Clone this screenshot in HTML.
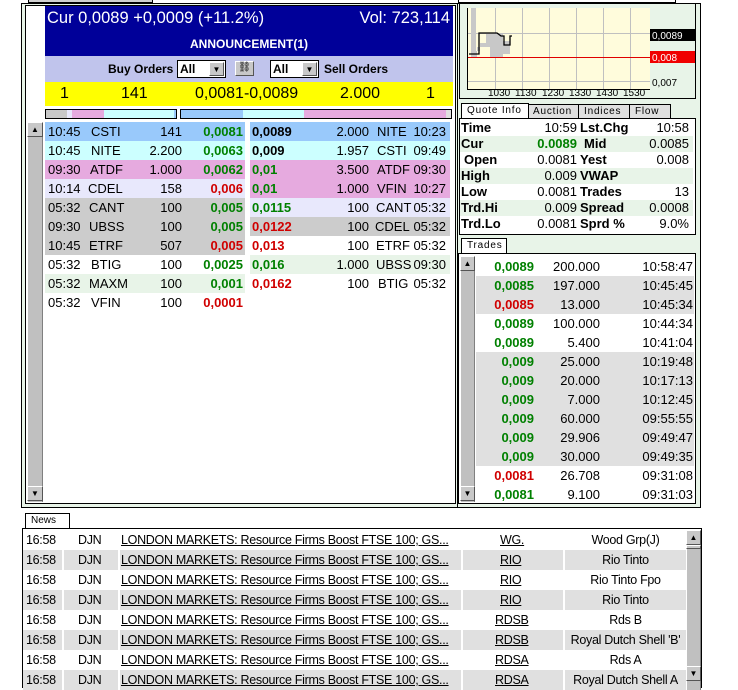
<!DOCTYPE html>
<html><head><meta charset="utf-8"><style>
*{margin:0;padding:0;box-sizing:border-box}
body{width:738px;height:682px;overflow:hidden;background:#fff;font-family:"Liberation Sans",Arial,sans-serif;font-size:13px;color:#000;position:relative}
.a{position:absolute}
.r{position:absolute;height:19px;line-height:19px;white-space:nowrap}
.r span{position:absolute;top:0}
.g{color:#008000;font-weight:bold}
.rd{color:#d00000;font-weight:bold}
.b{font-weight:bold}
.sb{position:absolute;background:#c0c0c0;border-left:1px solid #fff;border-right:1px solid #808080}
.btn{position:absolute;width:15px;height:15px;background:#c8c8c8;border:1px solid;border-color:#fff #555 #555 #fff;font-size:8px;line-height:13px;text-align:center}
.qr{position:absolute;left:460px;width:233px;height:16px;line-height:16px;font-size:13px}
.qr span{position:absolute;top:0}
.tr{position:absolute;left:476px;width:218px;height:19px;line-height:19px}
.tr span{position:absolute;top:0}
.nr{position:absolute;left:23px;width:663px;height:20px;line-height:20px;font-size:12.5px;letter-spacing:-0.3px;white-space:nowrap}
.nr span{position:absolute;top:0;height:20px}
.tab{position:absolute;height:15px;line-height:14px;font-size:10px;letter-spacing:0.8px;border:1px solid #000;border-bottom:none;background:#e0e0e0;padding-left:5px;white-space:nowrap;overflow:hidden}
</style></head><body>
<div class="a" style="left:28px;top:0;width:125px;height:3px;border:1px solid #000;border-top:none;background:#d0d0d0"></div>
<div class="a" style="left:458px;top:0;width:218px;height:3px;border:1px solid #000;border-top:none"></div>
<div class="a" style="left:21px;top:3px;width:437px;height:505px;border:1px solid #000;background:#e8f4e8"></div>
<div class="a" style="left:25px;top:5px;width:431px;height:499px;border:1px solid #000;background:#fff"></div>
<div class="a" style="left:45px;top:6px;width:408px;height:50px;background:#000099;color:#fff">
 <div class="a" style="left:2px;top:3px;font-size:16.5px">Cur 0,0089 +0,0009 (+11.2%)</div>
 <div class="a" style="right:3px;top:3px;font-size:16.5px">Vol: 723,114</div>
 <div class="a" style="left:0;width:408px;top:31px;text-align:center;font-size:12px;font-weight:bold">ANNOUNCEMENT(1)</div>
</div>
<div class="a" style="left:45px;top:56px;width:408px;height:26px;background:#c0c4ec">
 <div class="a" style="left:63px;top:6px;font-weight:bold;font-size:12px">Buy Orders</div>
 <div class="a" style="left:132px;top:4px;width:49px;height:18px;background:#fff;border:1px solid #000;font-weight:bold;font-size:12px;padding-left:2px;line-height:16px">All<div class="btn" style="right:1px;top:1px;width:15px;height:14px">▼</div></div>
 <div class="a" style="left:190px;top:5px;width:19px;height:15px;background:#c8c8c8;border:1px solid;border-color:#fff #555 #555 #fff;font-size:10px;line-height:12px;text-align:center">⛓</div>
 <div class="a" style="left:225px;top:4px;width:49px;height:18px;background:#fff;border:1px solid #000;font-weight:bold;font-size:12px;padding-left:2px;line-height:16px">All<div class="btn" style="right:1px;top:1px;width:15px;height:14px">▼</div></div>
 <div class="a" style="left:279px;top:6px;font-weight:bold;font-size:12px">Sell Orders</div>
</div>
<div class="a" style="left:45px;top:82px;width:408px;height:24px;background:#ffff00;font-size:16px;line-height:24px">
 <span class="a" style="left:15px">1</span><span class="a" style="left:76px">141</span><span class="a" style="left:150px">0,0081-0,0089</span><span class="a" style="left:295px">2.000</span><span class="a" style="left:381px">1</span>
</div>
<div class="a" style="left:45px;top:109px;width:132px;height:10px;border:1px solid #000;background:linear-gradient(90deg,#c8c8c8 0 21px,#e8e8fc 21px 26px,#e6aadf 26px 58px,#ccffff 58px 128px,#99c9fb 128px)"></div>
<div class="a" style="left:180px;top:109px;width:272px;height:10px;border:1px solid #000;background:linear-gradient(90deg,#99c9fb 0 62px,#ccffff 62px 123px,#e6aadf 123px 265px,#e0e0e0 265px)"></div>
<div class="sb" style="left:27px;top:122px;width:16px;height:380px"></div>
<div class="btn" style="left:27px;top:122px;width:16px">▲</div>
<div class="btn" style="left:27px;top:486px;width:16px">▼</div>
<div class="r" style="left:45px;top:122px;width:200px;background:#99c9fb"><span style="left:3px">10:45</span><span style="left:46px">CSTI</span><span style="right:63px">141</span><span class="g" style="right:2px">0,0081</span></div>
<div class="r" style="left:45px;top:141px;width:200px;background:#ccffff"><span style="left:3px">10:45</span><span style="left:46px">NITE</span><span style="right:63px">2.200</span><span class="g" style="right:2px">0,0063</span></div>
<div class="r" style="left:45px;top:160px;width:200px;background:#e6aadf"><span style="left:3px">09:30</span><span style="left:45px">ATDF</span><span style="right:63px">1.000</span><span class="g" style="right:2px">0,0062</span></div>
<div class="r" style="left:45px;top:179px;width:200px;background:#e8e8fc"><span style="left:3px">10:14</span><span style="left:43px">CDEL</span><span style="right:63px">158</span><span class="rd" style="right:2px">0,006</span></div>
<div class="r" style="left:45px;top:198px;width:200px;background:#cccccc"><span style="left:3px">05:32</span><span style="left:44px">CANT</span><span style="right:63px">100</span><span class="g" style="right:2px">0,005</span></div>
<div class="r" style="left:45px;top:217px;width:200px;background:#cccccc"><span style="left:3px">09:30</span><span style="left:44px">UBSS</span><span style="right:63px">100</span><span class="g" style="right:2px">0,005</span></div>
<div class="r" style="left:45px;top:236px;width:200px;background:#cccccc"><span style="left:3px">10:45</span><span style="left:44px">ETRF</span><span style="right:63px">507</span><span class="rd" style="right:2px">0,005</span></div>
<div class="r" style="left:45px;top:255px;width:200px;background:#fff"><span style="left:3px">05:32</span><span style="left:46px">BTIG</span><span style="right:63px">100</span><span class="g" style="right:2px">0,0025</span></div>
<div class="r" style="left:45px;top:274px;width:200px;background:#e8f4e8"><span style="left:3px">05:32</span><span style="left:44px">MAXM</span><span style="right:63px">100</span><span class="g" style="right:2px">0,001</span></div>
<div class="r" style="left:45px;top:293px;width:200px;background:#fff"><span style="left:3px">05:32</span><span style="left:46px">VFIN</span><span style="right:63px">100</span><span class="rd" style="right:2px">0,0001</span></div>
<div class="r" style="left:250px;top:122px;width:200px;background:#99c9fb"><span class="b" style="left:2px">0,0089</span><span style="right:81px">2.000</span><span style="left:127px">NITE</span><span style="right:4px">10:23</span></div>
<div class="r" style="left:250px;top:141px;width:200px;background:#ccffff"><span class="b" style="left:2px">0,009</span><span style="right:81px">1.957</span><span style="left:127px">CSTI</span><span style="right:4px">09:49</span></div>
<div class="r" style="left:250px;top:160px;width:200px;background:#e6aadf"><span class="g" style="left:2px">0,01</span><span style="right:81px">3.500</span><span style="left:127px">ATDF</span><span style="right:4px">09:30</span></div>
<div class="r" style="left:250px;top:179px;width:200px;background:#e6aadf"><span class="g" style="left:2px">0,01</span><span style="right:81px">1.000</span><span style="left:127px">VFIN</span><span style="right:4px">10:27</span></div>
<div class="r" style="left:250px;top:198px;width:200px;background:#e8e8fc"><span class="g" style="left:2px">0,0115</span><span style="right:81px">100</span><span style="left:126px">CANT</span><span style="right:4px">05:32</span></div>
<div class="r" style="left:250px;top:217px;width:200px;background:#cccccc"><span class="rd" style="left:2px">0,0122</span><span style="right:81px">100</span><span style="left:125px">CDEL</span><span style="right:4px">05:32</span></div>
<div class="r" style="left:250px;top:236px;width:200px;background:#fff"><span class="rd" style="left:2px">0,013</span><span style="right:81px">100</span><span style="left:126px">ETRF</span><span style="right:4px">05:32</span></div>
<div class="r" style="left:250px;top:255px;width:200px;background:#e8f4e8"><span class="g" style="left:2px">0,016</span><span style="right:81px">1.000</span><span style="left:126px">UBSS</span><span style="right:4px">09:30</span></div>
<div class="r" style="left:250px;top:274px;width:200px;background:#fff"><span class="rd" style="left:2px">0,0162</span><span style="right:81px">100</span><span style="left:128px">BTIG</span><span style="right:4px">05:32</span></div>

<div class="a" style="left:457px;top:3px;width:244px;height:505px;border:1px solid #000;background:#e8f4e8"></div>
<div class="a" style="left:459px;top:3px;width:237px;height:96px;border:1px solid #000;background:#e8f4e8"></div>
<svg class="a" style="left:459px;top:3px" width="237" height="96">
 <rect x="8" y="5" width="183" height="81" fill="#fffcdc"/>
 <g stroke="#c0c0c0" stroke-width="1">
  <line x1="36.5" y1="5" x2="36.5" y2="86"/><line x1="63.5" y1="5" x2="63.5" y2="86"/><line x1="90.5" y1="5" x2="90.5" y2="86"/><line x1="117.5" y1="5" x2="117.5" y2="86"/><line x1="144.5" y1="5" x2="144.5" y2="86"/><line x1="171.5" y1="5" x2="171.5" y2="86"/>
  <line x1="8" y1="30.5" x2="191" y2="30.5"/><line x1="8" y1="78.5" x2="191" y2="78.5"/>
 </g>
 <path d="M12 5 H17 V48 H21 V40 H27 V31 H44 V38 H51 V51 H44 V54 H31 V44 H18 V54 H12 Z" fill="#c8c8c8"/>
 <path d="M10 51 H20 V30 H38 L42 33 H45 V42 H51 V33 H53" fill="none" stroke="#000" stroke-width="1.3"/>
 <line x1="8" y1="54.5" x2="191" y2="54.5" stroke="#e00000"/>
 <path d="M8.5 5 V86.5 H191" fill="none" stroke="#000"/>
 <g fill="#000" font-family="Liberation Sans,sans-serif" font-size="10"><text x="29" y="93">1030</text><text x="56" y="93">1130</text><text x="83" y="93">1230</text><text x="110" y="93">1330</text><text x="137" y="93">1430</text><text x="164" y="93">1530</text></g>
 <rect x="191" y="26" width="45" height="12" fill="#000"/><text x="193" y="36" fill="#fff" font-family="Liberation Sans,sans-serif" font-size="10">0,0089</text>
 <rect x="191" y="48" width="45" height="12" fill="#f00000"/><text x="193" y="58" fill="#fff" font-family="Liberation Sans,sans-serif" font-size="10">0,008</text>
 <text x="193" y="83" fill="#000" font-family="Liberation Sans,sans-serif" font-size="10">0,007</text>
</svg>
<div class="tab" style="left:578px;top:104px;width:53px;height:14px">Indices</div>
<div class="tab" style="left:629px;top:104px;width:42px;height:14px">Flow</div>
<div class="tab" style="left:527px;top:104px;width:52px;height:14px">Auction</div>
<div class="tab" style="left:461px;top:103px;width:68px;background:#fff">Quote Info</div>
<div class="a" style="left:459px;top:118px;width:237px;height:117px;border:1px solid #000;background:#fff"></div>
<div class="qr" style="top:120px"><span class="b" style="left:1px">Time</span><span style="right:116px">10:59</span><span class="b" style="left:120px">Lst.Chg</span><span style="right:4px">10:58</span></div>
<div class="qr" style="top:136px;background:#e8f4e8"><span class="b" style="left:1px">Cur</span><span class="g" style="right:116px">0.0089</span><span class="b" style="left:124px">Mid</span><span style="right:4px">0.0085</span></div>
<div class="qr" style="top:152px"><span class="b" style="left:4px">Open</span><span style="right:116px">0.0081</span><span class="b" style="left:120px">Yest</span><span style="right:4px">0.008</span></div>
<div class="qr" style="top:168px;background:#e8f4e8"><span class="b" style="left:1px">High</span><span style="right:116px">0.009</span><span class="b" style="left:120px">VWAP</span></div>
<div class="qr" style="top:184px"><span class="b" style="left:1px">Low</span><span style="right:116px">0.0081</span><span class="b" style="left:120px">Trades</span><span style="right:4px">13</span></div>
<div class="qr" style="top:200px;background:#e8f4e8"><span class="b" style="left:1px">Trd.Hi</span><span style="right:116px">0.009</span><span class="b" style="left:120px">Spread</span><span style="right:4px">0.0008</span></div>
<div class="qr" style="top:216px"><span class="b" style="left:1px">Trd.Lo</span><span style="right:116px">0.0081</span><span class="b" style="left:120px">Sprd %</span><span style="right:4px">9.0%</span></div>
<div class="tab" style="left:461px;top:238px;width:46px;background:#fff">Trades</div>
<div class="a" style="left:458px;top:253px;width:238px;height:251px;border:1px solid #000;background:#fff"></div>
<div class="sb" style="left:460px;top:256px;width:15px;height:246px"></div>
<div class="btn" style="left:460px;top:256px">▲</div>
<div class="btn" style="left:460px;top:486px">▼</div>
<div class="tr" style="top:257px"><span class="g" style="right:160px">0,0089</span><span style="right:94px">200.000</span><span style="right:1px">10:58:47</span></div>
<div class="tr" style="top:276px;background:#e0e0e0"><span class="g" style="right:160px">0,0085</span><span style="right:94px">197.000</span><span style="right:1px">10:45:45</span></div>
<div class="tr" style="top:295px;background:#e0e0e0"><span class="rd" style="right:160px">0,0085</span><span style="right:94px">13.000</span><span style="right:1px">10:45:34</span></div>
<div class="tr" style="top:314px"><span class="g" style="right:160px">0,0089</span><span style="right:94px">100.000</span><span style="right:1px">10:44:34</span></div>
<div class="tr" style="top:333px"><span class="g" style="right:160px">0,0089</span><span style="right:94px">5.400</span><span style="right:1px">10:41:04</span></div>
<div class="tr" style="top:352px;background:#e0e0e0"><span class="g" style="right:160px">0,009</span><span style="right:94px">25.000</span><span style="right:1px">10:19:48</span></div>
<div class="tr" style="top:371px;background:#e0e0e0"><span class="g" style="right:160px">0,009</span><span style="right:94px">20.000</span><span style="right:1px">10:17:13</span></div>
<div class="tr" style="top:390px;background:#e0e0e0"><span class="g" style="right:160px">0,009</span><span style="right:94px">7.000</span><span style="right:1px">10:12:45</span></div>
<div class="tr" style="top:409px;background:#e0e0e0"><span class="g" style="right:160px">0,009</span><span style="right:94px">60.000</span><span style="right:1px">09:55:55</span></div>
<div class="tr" style="top:428px;background:#e0e0e0"><span class="g" style="right:160px">0,009</span><span style="right:94px">29.906</span><span style="right:1px">09:49:47</span></div>
<div class="tr" style="top:447px;background:#e0e0e0"><span class="g" style="right:160px">0,009</span><span style="right:94px">30.000</span><span style="right:1px">09:49:35</span></div>
<div class="tr" style="top:466px"><span class="rd" style="right:160px">0,0081</span><span style="right:94px">26.708</span><span style="right:1px">09:31:08</span></div>
<div class="tr" style="top:485px"><span class="g" style="right:160px">0,0081</span><span style="right:94px">9.100</span><span style="right:1px">09:31:03</span></div>

<div class="tab" style="left:25px;top:513px;width:45px;background:#fff;font-size:10px;letter-spacing:0">News</div>
<div class="a" style="left:22px;top:528px;width:680px;height:160px;border:1px solid #000;background:#fff"></div>
<div class="sb" style="left:686px;top:530px;width:15px;height:160px"></div>
<div class="btn" style="left:686px;top:530px">▲</div>
<div class="a" style="left:686px;top:545px;width:15px;height:4px;background:#c8c8c8;border:1px solid;border-color:#fff #555 #555 #fff"></div>
<div class="btn" style="left:686px;top:666px">▼</div>
<div class="nr" style="top:530px"><span style="left:3px">16:58</span><span style="left:55px">DJN</span><span style="left:98px;text-decoration:underline">LONDON MARKETS: Resource Firms Boost FTSE 100; GS...</span><span style="left:477px;text-decoration:underline">WG.</span><span style="left:542px;width:121px;text-align:center">Wood Grp(J)</span></div>
<div class="nr" style="top:550px;background:linear-gradient(90deg,#e0e0e0 0 39px,#fff 39px 41px,#e0e0e0 41px 95px,#fff 95px 97px,#e0e0e0 97px 438px,#fff 438px 440px,#e0e0e0 440px 540px,#fff 540px 542px,#e0e0e0 542px)"><span style="left:3px">16:58</span><span style="left:55px">DJN</span><span style="left:98px;text-decoration:underline">LONDON MARKETS: Resource Firms Boost FTSE 100; GS...</span><span style="left:477px;text-decoration:underline">RIO</span><span style="left:542px;width:121px;text-align:center">Rio Tinto</span></div>
<div class="nr" style="top:570px"><span style="left:3px">16:58</span><span style="left:55px">DJN</span><span style="left:98px;text-decoration:underline">LONDON MARKETS: Resource Firms Boost FTSE 100; GS...</span><span style="left:477px;text-decoration:underline">RIO</span><span style="left:542px;width:121px;text-align:center">Rio Tinto Fpo</span></div>
<div class="nr" style="top:590px;background:linear-gradient(90deg,#e0e0e0 0 39px,#fff 39px 41px,#e0e0e0 41px 95px,#fff 95px 97px,#e0e0e0 97px 438px,#fff 438px 440px,#e0e0e0 440px 540px,#fff 540px 542px,#e0e0e0 542px)"><span style="left:3px">16:58</span><span style="left:55px">DJN</span><span style="left:98px;text-decoration:underline">LONDON MARKETS: Resource Firms Boost FTSE 100; GS...</span><span style="left:477px;text-decoration:underline">RIO</span><span style="left:542px;width:121px;text-align:center">Rio Tinto</span></div>
<div class="nr" style="top:610px"><span style="left:3px">16:58</span><span style="left:55px">DJN</span><span style="left:98px;text-decoration:underline">LONDON MARKETS: Resource Firms Boost FTSE 100; GS...</span><span style="left:472px;text-decoration:underline">RDSB</span><span style="left:542px;width:121px;text-align:center">Rds B</span></div>
<div class="nr" style="top:630px;background:linear-gradient(90deg,#e0e0e0 0 39px,#fff 39px 41px,#e0e0e0 41px 95px,#fff 95px 97px,#e0e0e0 97px 438px,#fff 438px 440px,#e0e0e0 440px 540px,#fff 540px 542px,#e0e0e0 542px)"><span style="left:3px">16:58</span><span style="left:55px">DJN</span><span style="left:98px;text-decoration:underline">LONDON MARKETS: Resource Firms Boost FTSE 100; GS...</span><span style="left:472px;text-decoration:underline">RDSB</span><span style="left:542px;width:121px;text-align:center">Royal Dutch Shell 'B'</span></div>
<div class="nr" style="top:650px"><span style="left:3px">16:58</span><span style="left:55px">DJN</span><span style="left:98px;text-decoration:underline">LONDON MARKETS: Resource Firms Boost FTSE 100; GS...</span><span style="left:472px;text-decoration:underline">RDSA</span><span style="left:542px;width:121px;text-align:center">Rds A</span></div>
<div class="nr" style="top:670px;background:linear-gradient(90deg,#e0e0e0 0 39px,#fff 39px 41px,#e0e0e0 41px 95px,#fff 95px 97px,#e0e0e0 97px 438px,#fff 438px 440px,#e0e0e0 440px 540px,#fff 540px 542px,#e0e0e0 542px)"><span style="left:3px">16:58</span><span style="left:55px">DJN</span><span style="left:98px;text-decoration:underline">LONDON MARKETS: Resource Firms Boost FTSE 100; GS...</span><span style="left:472px;text-decoration:underline">RDSA</span><span style="left:542px;width:121px;text-align:center">Royal Dutch Shell A</span></div>
</body></html>
